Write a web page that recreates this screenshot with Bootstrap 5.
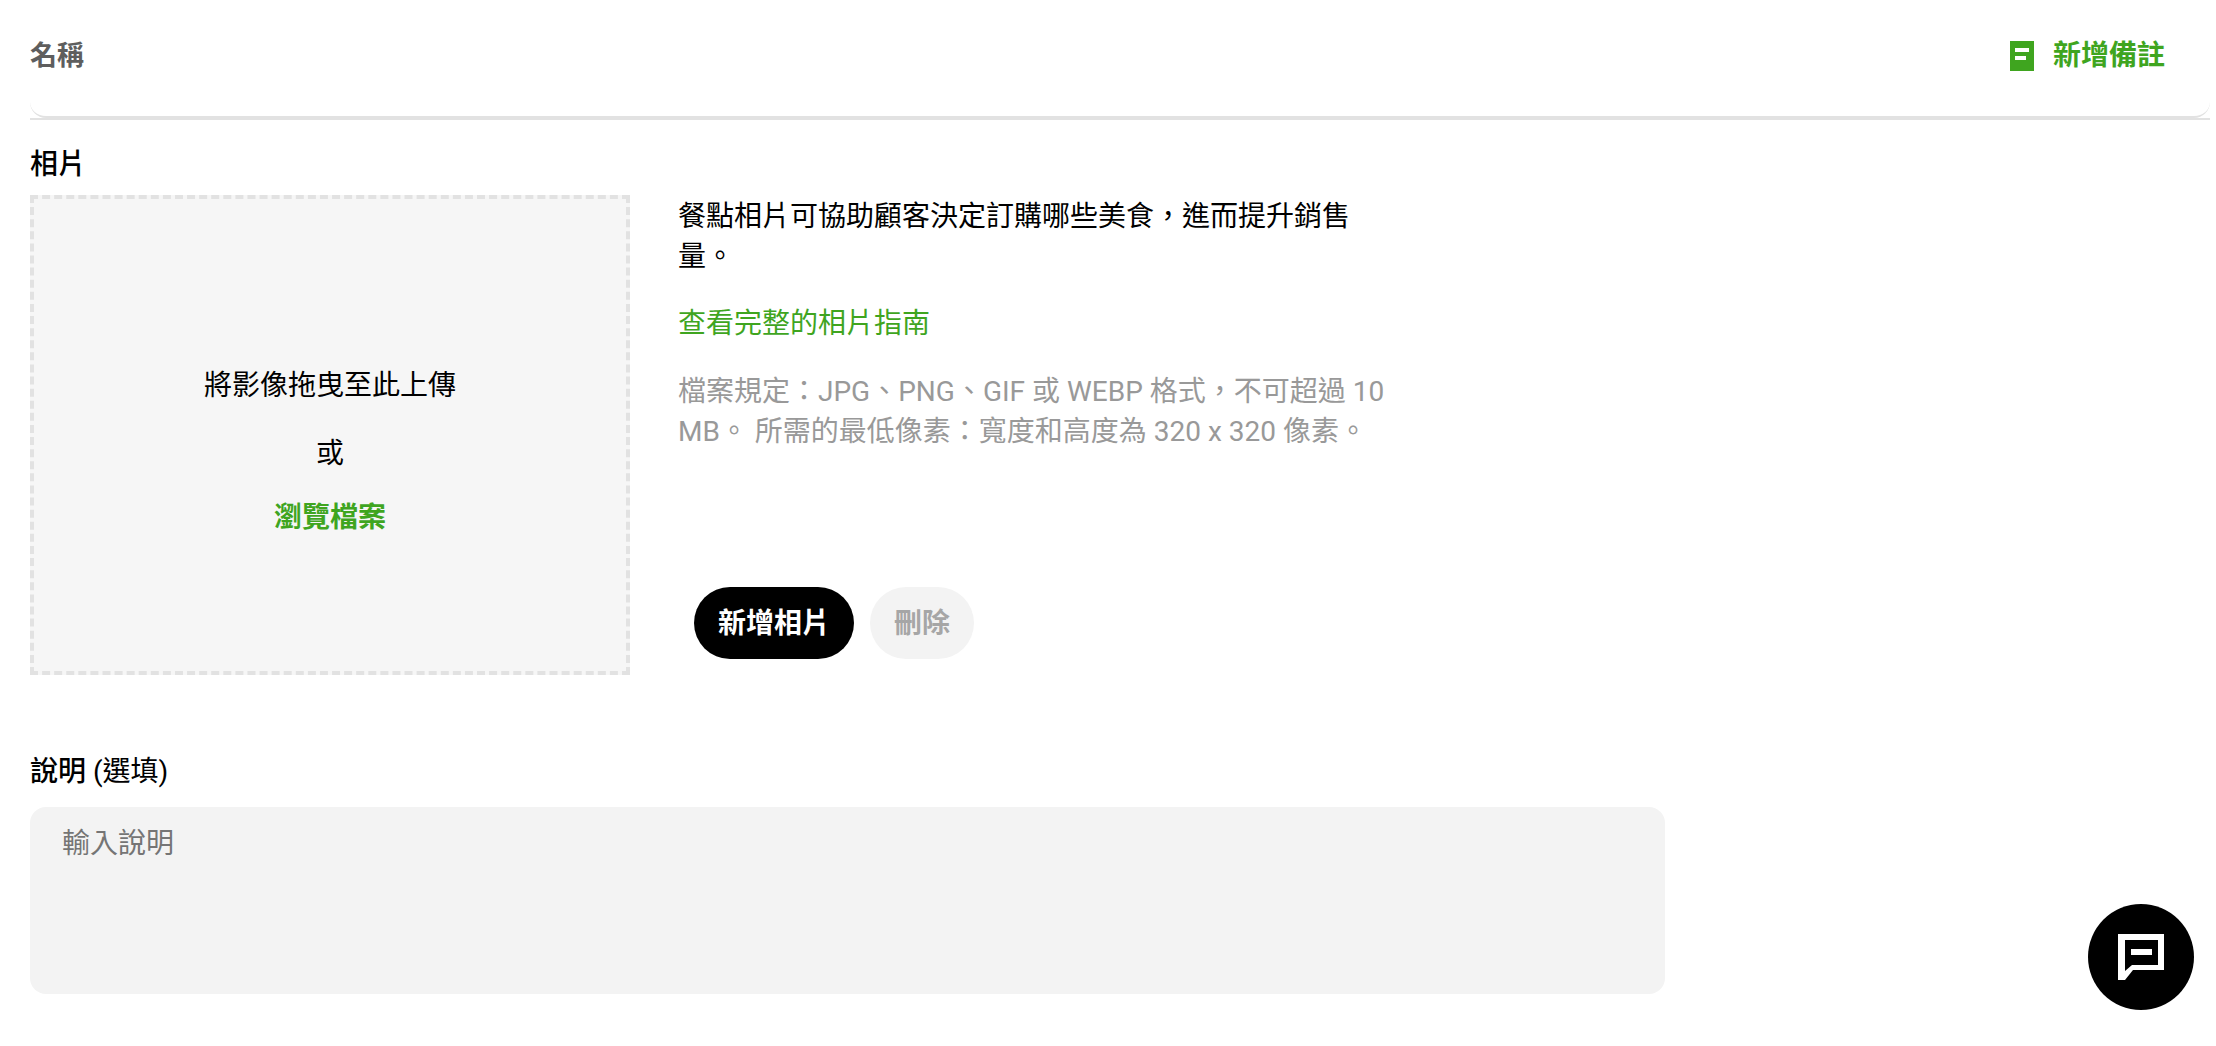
<!DOCTYPE html>
<html lang="zh-Hant">
<head>
  <meta charset="UTF-8" />
  <meta name="viewport" content="width=device-width, initial-scale=1.0"/>
  <title>餐點相片</title>
  <link href="https://cdn.jsdelivr.net/npm/bootstrap@5.3.0/dist/css/bootstrap.min.css" rel="stylesheet">
  <style>
    body {
      font-family: Roboto, "Noto Sans CJK TC", sans-serif;
      font-size: 28px;
      line-height: 40px;
      color: #000;
      background: #fff;
      padding: 0 6px 0 30px;
    }
    .name-bar { border-bottom: 2px solid #e2e2e2; }
    .name-bar-inner {
      height: 118px;
      padding: 36px 45px 0 0;
      border-bottom: 2px solid #e2e2e2;
      border-radius: 0 0 16px 16px;
    }
    .name-title { color: #5e5e5e; font-weight: 700; font-size: 27px; }
    .note-link { color: #3fa51f; font-weight: 700; text-decoration: none; gap: 19px; }
    .field-title { font-size: 28px; font-weight: 500; line-height: 36px; }
    .photo-title { margin: 27px 0 12px; }
    .drop-zone {
      width: 600px;
      height: 480px;
      padding-top: 34px;
      flex: none;
      background: #f6f6f6;
      border: 4px dashed #e2e2e2;
    }
    .drop-zone p { margin: 0; }
    .drop-zone .first-line { margin-bottom: 28px; }
    .drop-zone .second-line { margin-bottom: 24px; }
    .green-text { color: #3fa51f; }
    .browse-link { font-weight: 700; text-decoration: none; }
    .photo-info { width: 756px; padding: 2px 0 16px 48px; }
    .guide-link { display: block; margin-top: 27px; text-decoration: none; }
    .file-rules { margin: 28px 0 0; color: #999; }
    .photo-btn {
      height: 72px;
      padding: 2px 24px 0;
      font-size: 28px;
      font-weight: 700;
      line-height: 40px;
      border: 0;
    }
    .photo-btn-add { background: #000; color: #fff; }
    .photo-btn-del, .photo-btn-del:disabled { background: #f3f3f3; color: #a6a6a6; opacity: 1; }
    .photo-actions { margin-left: 16px; gap: 16px; }
    .desc-title { margin: 79px 0 17px; }
    .desc-input.form-control {
      width: 1635px;
      height: 187px;
      padding: 17px 32px;
      font-size: 28px;
      line-height: 40px;
      background: #f3f3f3;
      border: 0;
      border-radius: 16px;
      resize: none;
    }
    .desc-input::placeholder { color: #757575; }
    .chat-btn {
      position: fixed;
      right: 22px;
      bottom: 36px;
      width: 106px;
      height: 106px;
      background: #000;
      border: 0;
    }
  </style>
</head>
<body>
  <div class="name-bar">
    <div class="name-bar-inner d-flex justify-content-between align-items-start">
      <span class="name-title">名稱</span>
      <a href="#" class="note-link d-flex align-items-center">
        <svg width="24" height="30" viewBox="0 0 24 30" aria-hidden="true">
          <path fill="#3fa51f" fill-rule="evenodd" d="M0 0h24v30H0zM5 7v4h14V7zm0 8v4h11v-4z"/>
        </svg>
        新增備註
      </a>
    </div>
  </div>

  <div class="field-title photo-title">相片</div>
  <div class="d-flex">
    <div class="drop-zone d-flex flex-column align-items-center justify-content-center">
      <p class="first-line">將影像拖曳至此上傳</p>
      <p class="second-line">或</p>
      <a href="#" class="browse-link green-text">瀏覽檔案</a>
    </div>
    <div class="photo-info d-flex flex-column">
      <div>餐點相片可協助顧客決定訂購哪些美食，進而提升銷售量。</div>
      <a href="#" class="guide-link green-text">查看完整的相片指南</a>
      <p class="file-rules">檔案規定：JPG、PNG、GIF 或 WEBP 格式，不可超過 10 MB。 所需的最低像素：寬度和高度為 320 x 320 像素。</p>
      <div class="photo-actions d-flex mt-auto">
        <button type="button" class="btn photo-btn photo-btn-add rounded-pill">新增相片</button>
        <button type="button" class="btn photo-btn photo-btn-del rounded-pill" disabled>刪除</button>
      </div>
    </div>
  </div>

  <label for="desc" class="field-title desc-title d-block">說明 <span class="fw-normal">(選填)</span></label>
  <textarea id="desc" class="desc-input form-control" placeholder="輸入說明"></textarea>

  <button type="button" class="chat-btn rounded-circle d-flex align-items-center justify-content-center" aria-label="聊天">
    <svg width="46" height="46" viewBox="0 0 46 46" aria-hidden="true">
      <path fill="#fff" fill-rule="evenodd" d="M0 0h46v36H15L7 46H0zM7 6v31l7-6h26V6zm6 9v6h21v-6z"/>
    </svg>
  </button>

  <script src="https://cdn.jsdelivr.net/npm/bootstrap@5.3.0/dist/js/bootstrap.bundle.min.js"></script>
</body>
</html>
